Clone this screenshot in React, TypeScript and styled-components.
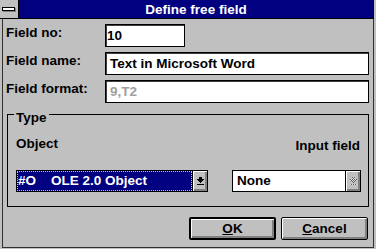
import React from 'react';
import styled, { createGlobalStyle } from 'styled-components';

const GlobalStyle = createGlobalStyle`
  html, body {
    margin: 0;
    padding: 0;
    background: #c0c0c0;
  }
  body {
    font-family: "Liberation Sans", Arial, sans-serif;
  }
`;

const Window = styled.div`
  width: 376px;
  height: 249px;
  box-sizing: border-box;
  display: flex;
  flex-direction: column;
  background: #c0c0c0;
  font-family: "Liberation Sans", Arial, sans-serif;
  font-size: 13.5px;
  font-weight: bold;
  color: #000;
  overflow: hidden;
`;

const TitleBar = styled.div`
  height: 18px;
  flex: none;
  margin-right: 2px;
  display: flex;
  background: #000080;
  border-bottom: 1px solid #000;
  border-right: 1px solid #000;
`;

const SysMenu = styled.div`
  width: 18px;
  flex: none;
  display: flex;
  align-items: center;
  justify-content: center;
  background: #c0c0c0;
  border-right: 1px solid #000;
`;

const SysBar = styled.div`
  width: 11px;
  height: 2px;
  margin: 0 1px 1px 0;
  background: #fff;
  border: 1px solid #000;
  box-shadow: 1px 1px 0 #808080;
`;

const Title = styled.div`
  flex: 1;
  height: 18px;
  overflow: hidden;
  text-align: center;
  color: #fff;
  line-height: 20px;
`;

const Client = styled.div`
  flex: 1;
  display: flex;
  flex-direction: column;
  margin: 0 2px 1px 2px;
  padding: 5px 4px 0 3px;
  border: 1px solid #303030;
  border-top: none;
`;

const FieldGrid = styled.div`
  display: grid;
  grid-template-columns: 99px 1fr;
  grid-auto-rows: 23px;
  row-gap: 5px;
`;

const Label = styled.div`
  line-height: 16px;
  padding-top: 1px;
  white-space: nowrap;
`;

const EditBox = styled.div<{ $width?: number; $pad: number; $disabled?: boolean }>`
  box-sizing: border-box;
  width: ${p => (p.$width ? `${p.$width}px` : '100%')};
  height: 23px;
  padding-left: ${p => p.$pad}px;
  background: #fff;
  border: 1px solid #000;
  box-shadow: inset 1px 1px 0 #404040;
  color: ${p => (p.$disabled ? '#a0a0a0' : '#000')};
  line-height: 21px;
  white-space: nowrap;
  overflow: hidden;
`;

const Group = styled.fieldset`
  margin: 1px 0 0 1px;
  padding: 12px 7px 14px 8px;
  border: 1px solid #000;
  min-width: 0;
`;

const Legend = styled.legend`
  margin-left: -2px;
  padding: 7px 2px 0 2px;
  line-height: 14px;
`;

const CaptionRow = styled.div`
  display: flex;
  justify-content: space-between;
  line-height: 14px;
`;

const Caption = styled.span<{ $drop?: number }>`
  margin-top: ${p => p.$drop || 0}px;
  margin-right: ${p => (p.$drop ? 1 : 0)}px;
`;

const ComboRow = styled.div`
  display: flex;
  justify-content: space-between;
  margin-top: 17px;
`;

const Combo = styled.div<{ $width: number }>`
  box-sizing: border-box;
  width: ${p => p.$width}px;
  height: 22px;
  display: flex;
  border: 1px solid #000;
  background: #fff;
`;

const ComboValue = styled.div<{ $selected?: boolean }>`
  flex: 1;
  display: flex;
  align-items: center;
  padding-left: ${p => (p.$selected ? 1 : 4)}px;
  background: ${p => (p.$selected ? '#000080' : '#fff')};
  color: ${p => (p.$selected ? '#fff' : '#000')};
  outline: ${p => (p.$selected ? '1px dotted #c0c0ff' : 'none')};
  outline-offset: -1px;
  line-height: 20px;
  white-space: nowrap;
`;

const Code = styled.span`
  display: inline-block;
  width: 33px;
`;

const ComboButton = styled.div`
  width: 15px;
  flex: none;
  box-sizing: border-box;
  display: flex;
  align-items: center;
  justify-content: center;
  padding-left: 1px;
  background: #c0c0c0;
  border-left: 1px solid #000;
  box-shadow: inset 1px 1px 0 #fff, inset -2px -2px 0 #808080;
`;

const ButtonRow = styled.div`
  display: flex;
  justify-content: flex-end;
  gap: 5px;
  margin-top: 10px;
  padding-right: 1px;
`;

const PushButton = styled.button<{ $default?: boolean }>`
  box-sizing: border-box;
  width: 87px;
  height: 23px;
  padding: 0;
  border: ${p => (p.$default ? 2 : 1)}px solid #000;
  border-radius: 2px;
  background: #c0c0c0;
  box-shadow: inset 1px 1px 0 #fff, inset -2px -2px 0 #808080;
  font: inherit;
  color: #000;
  line-height: 18px;
`;

const DownArrow = ({ disabled }: { disabled?: boolean }) => {
  const fill = disabled ? 'url(#dither)' : '#000';
  return (
    <svg width="7" height="9" viewBox="0 0 7 9" shapeRendering="crispEdges">
      {disabled && (
        <defs>
          <pattern id="dither" width="2" height="2" patternUnits="userSpaceOnUse">
            <rect width="2" height="2" fill="#e0e0e0" />
            <rect width="1" height="1" fill="#606060" />
            <rect x="1" y="1" width="1" height="1" fill="#606060" />
          </pattern>
        </defs>
      )}
      <path d="M2 0h3v2h2v1h-1v1h-1v1h-1v1h-1v-1h-1v-1h-1v-1H0V2h2z" fill={fill} />
      <rect x="0" y="7" width="7" height="1" fill={fill} />
    </svg>
  );
};

export default function App() {
  return (
    <>
      <GlobalStyle />
      <Window>
        <TitleBar>
          <SysMenu>
            <SysBar />
          </SysMenu>
          <Title>Define free field</Title>
        </TitleBar>
        <Client>
          <FieldGrid>
            <Label>Field no:</Label>
            <EditBox $width={80} $pad={1}>10</EditBox>
            <Label>Field name:</Label>
            <EditBox $pad={4}>Text in Microsoft Word</EditBox>
            <Label>Field format:</Label>
            <EditBox $pad={4} $disabled>9,T2</EditBox>
          </FieldGrid>

          <Group>
            <Legend>Type</Legend>
            <CaptionRow>
              <Caption>Object</Caption>
              <Caption $drop={2}>Input field</Caption>
            </CaptionRow>
            <ComboRow>
              <Combo $width={192}>
                <ComboValue $selected>
                  <Code>#O</Code>OLE 2.0 Object
                </ComboValue>
                <ComboButton>
                  <DownArrow />
                </ComboButton>
              </Combo>
              <Combo $width={129}>
                <ComboValue>None</ComboValue>
                <ComboButton>
                  <DownArrow disabled />
                </ComboButton>
              </Combo>
            </ComboRow>
          </Group>

          <ButtonRow>
            <PushButton $default>
              <u>O</u>K
            </PushButton>
            <PushButton>
              <u>C</u>ancel
            </PushButton>
          </ButtonRow>
        </Client>
      </Window>
    </>
  );
}
